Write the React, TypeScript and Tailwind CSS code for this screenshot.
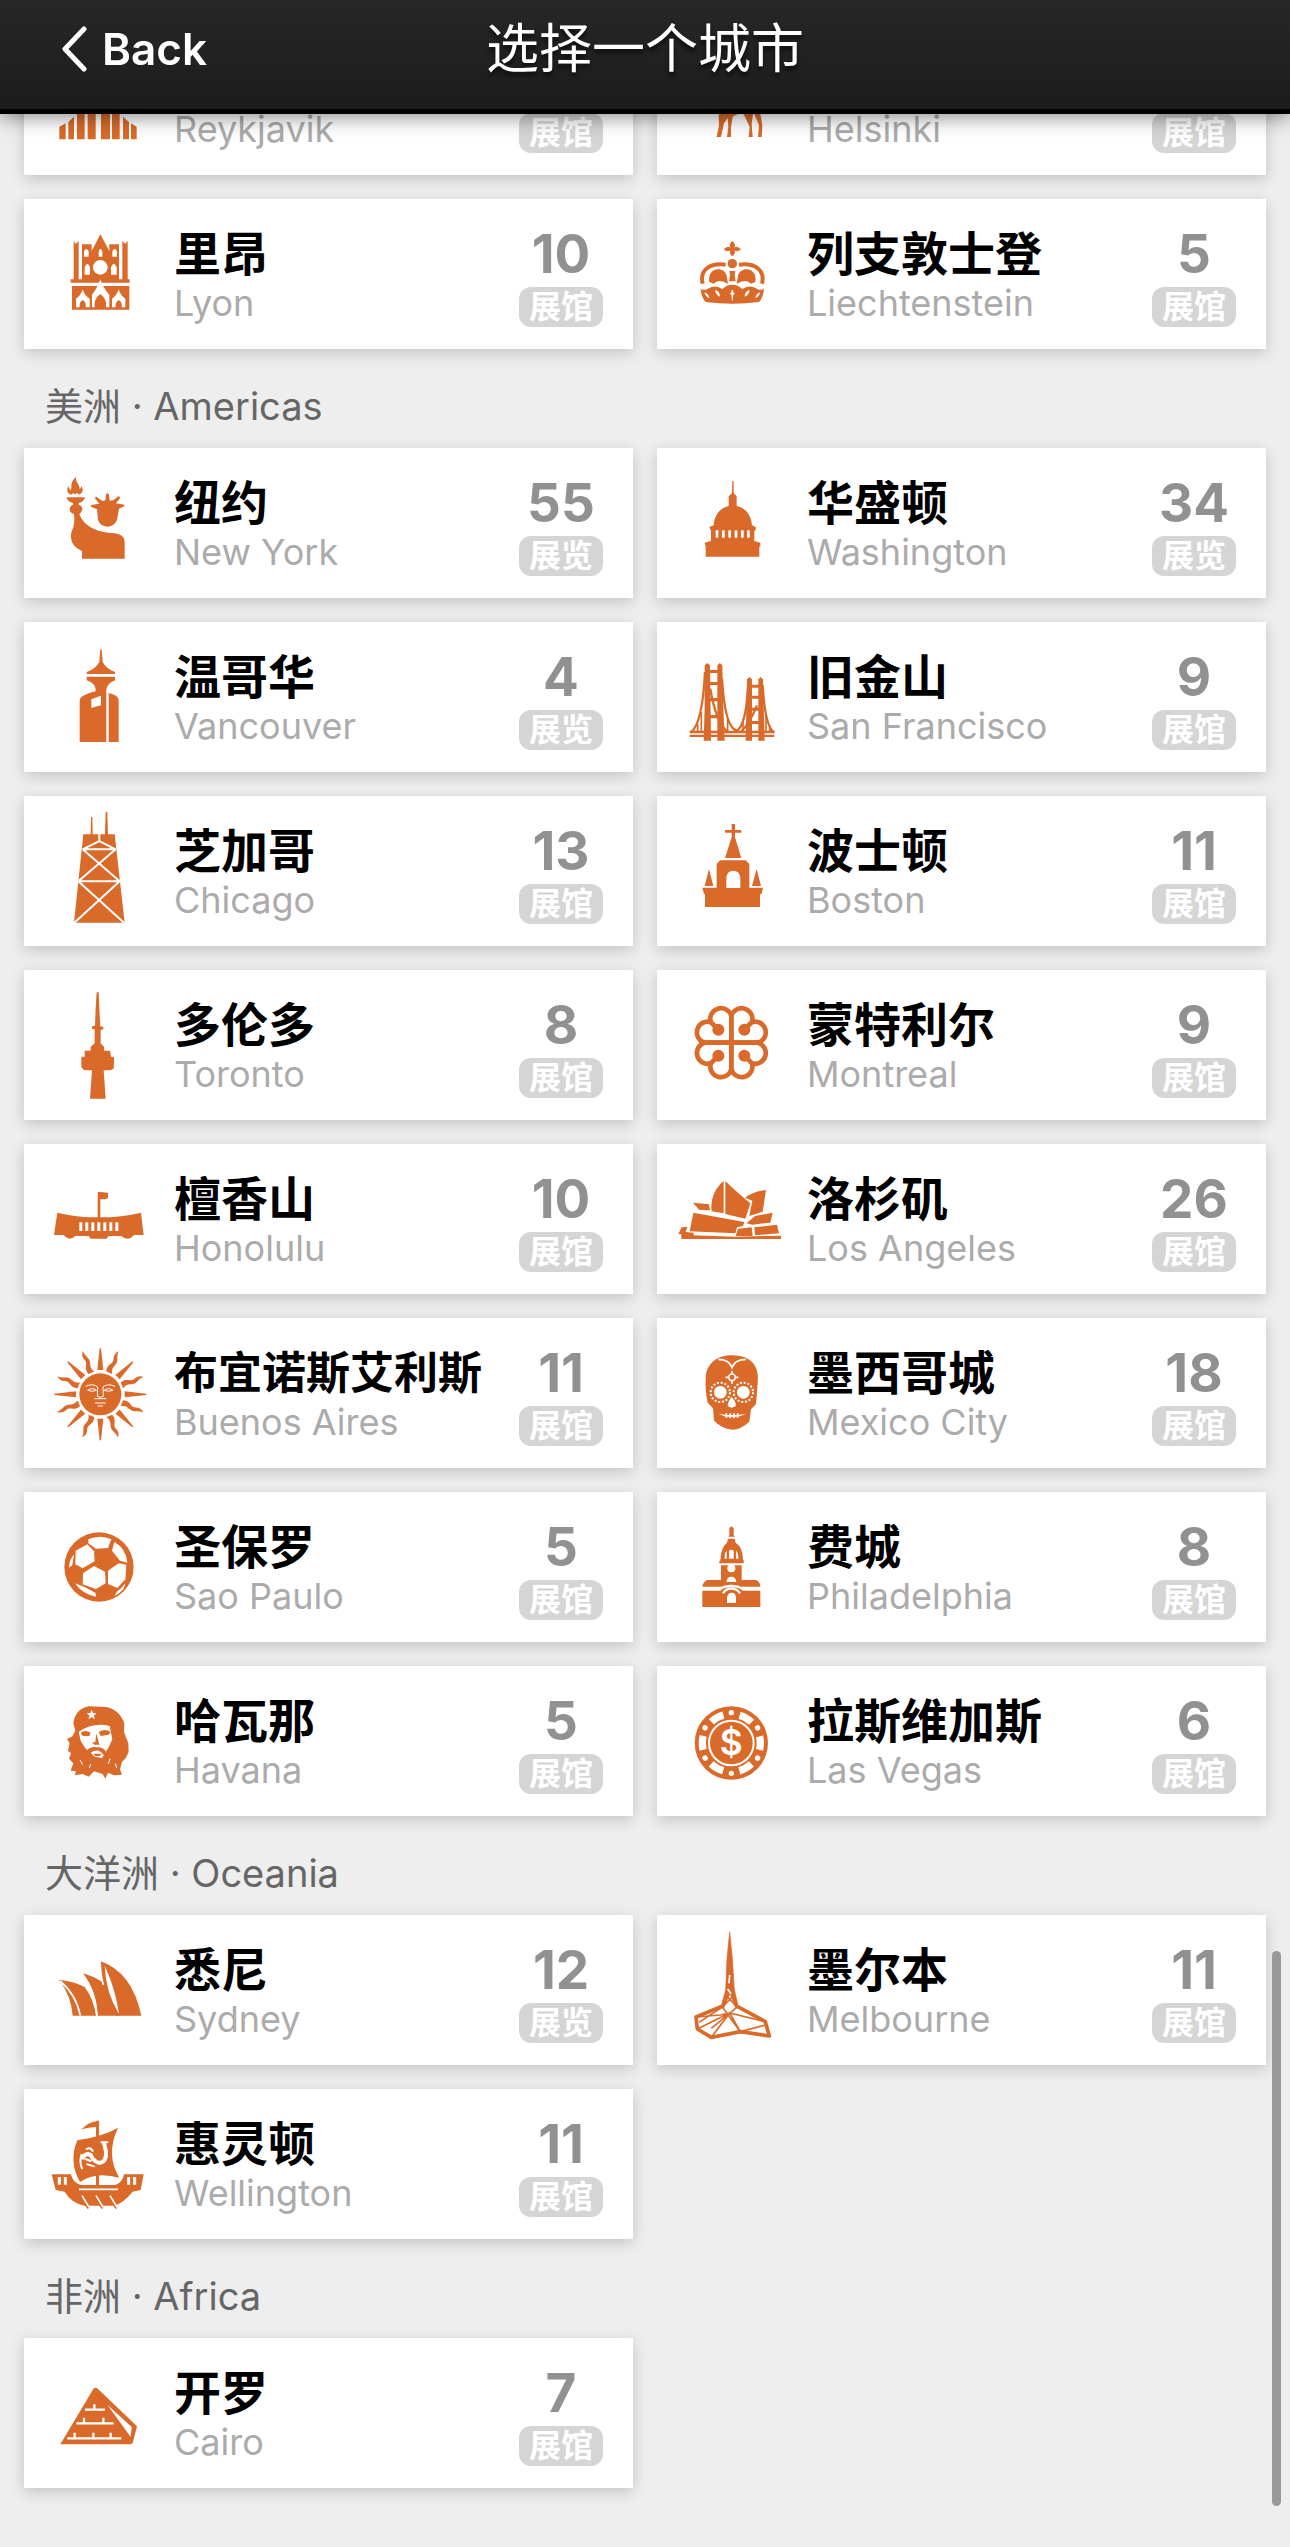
import clsx from "clsx";
import React from "react";

type City = {
  name?: string;
  english: string;
  count?: number;
  unit: "展馆" | "展览";
  viewBox: string;
  icon: React.ReactNode;
};

type Region = {
  title?: string;
  cities: City[];
};

const SPOKES = [0, 45, 90, 135, 180, 225, 270, 315];

const ReykjavikIcon = (
  <path d="M118 80l19-10v48h-19zM145 66l17-16v68h-17zM171 42l23-40v116h-23zM203 -20l24-60v198h-24zM243 -80l27 60v138h-27zM276 2l23 40v76h-23zM309 50l18 16v52h-18zM333 70l17 10v38h-17z" />
);

const HelsinkiIcon = (
  <path d="M190 0Q250-20 316 0V42L322 76L320 111H309L312 76L298 42H294L290 72L293 111H281L284 80L264 38L244 44L233 50L228 82V111H216L220 82L218 54L207 70L198 111H185L192 76Z" />
);

const LyonIcon = (
  <>
    <path d="M161 422l6 10 9-10v116h10V433h29v20l26-50 27 50v-20h29v105h10V422l9 10 7-10v116h6v10H152v-10h9z" />
    <path d="M156 558h172v71H156z" />
    <g className="fill-white">
      <path d="M192 470v-16q7-14 14 0v16zM277 470v-16q7-14 14 0v16zM236 470v-16q5-14 11 0v16zM194 524v-22q8-22 16 0v22zM273 524v-22q8-22 17 0v22z" />
      <circle cx="241" cy="502" r="22" />
      <path d="M162 551h60v5h-60zM261 551h64v5h-64zM241 538q8 26 27 46v38h-10q4-24-17-40q-21 16-17 40h-8v-38q17-20 25-46z" />
      <path d="M188 568q5 18 21 28v26h-12q2-16-9-22q-11 6-9 22h-11v-26q15-10 20-28zM296 568q5 18 20 28v26h-11q2-16-9-22q-11 6-9 22h-11v-26q15-10 20-28z" />
    </g>
  </>
);

const CrownIcon = (
  <>
    <path d="M232 423q13 11 5 20q9-8 21 5q-12 11-21 2q8 9-5 19q-12-10-5-19q-9 9-21-2q12-13 21-5q-8-9 5-20z" />
    <circle cx="232" cy="491" r="14" />
    <path d="M223 513h18l-2 12 3 19h-20l3-19z" />
    <g className="fill-none stroke-current" strokeWidth="12">
      <path d="M143 551C133 510 164 488 212 494M321 551C331 510 300 488 252 494" />
    </g>
    <path d="M163 546C155 502 207 496 215 527L219 551Q190 535 176 551zM301 546C309 502 257 496 249 527L245 551Q274 535 288 551z" />
    <path d="M137 566Q148 573 158 566Q183 552 202 567Q215 554 232 554Q249 554 262 567Q281 552 306 566Q316 573 327 566Q325 592 312 606Q232 616 152 606Q139 592 137 566z" />
    <g className="fill-white">
      <path d="M148 577q13 4 15 18q-11-5-15-18zM180 570q14 2 15 20q-13-4-15-20zM316 577q-13 4-15 18q11-5 15-18zM284 570q-14 2-15 20q13-4 15-20zM230 570h4l1 8 5 2-5 4-2 18h-2l-2-18-5-4 5-2z" />
    </g>
  </>
);

const LibertyIcon = (
  <>
    <path d="M169 1130C148 1148 158 1156 152 1172L145 1159C137 1174 146 1184 156 1184Q160 1176 165 1184Q171 1176 176 1184C190 1180 190 1168 185 1159L179 1168C180 1150 164 1148 169 1130z" />
    <path d="M139 1192H195Q192 1206 176 1209V1214Q188 1218 187 1228Q186 1236 178 1243C190 1275 225 1294 262 1298C298 1299 314 1304 314 1328V1376H186V1353C160 1342 152 1325 153 1305C155 1286 166 1284 162 1243Q149 1238 149 1228Q149 1218 159 1214V1209Q143 1206 139 1192z" />
    <path d="M231 1228L213 1220V1215L238 1211L224 1194L229 1190L247 1203L256 1201L258 1184Q262 1176 267 1184L269 1202L280 1201L296 1188L301 1193L288 1210L313 1214V1219L297 1226L291 1260Q282 1280 262 1280Q241 1279 234 1260z" />
  </>
);

const CapitolIcon = (
  <>
    <path d="M232 1143h4v36l9 10v29C275 1225 289 1248 291 1276L302 1281V1290L298 1293V1323L316 1328V1338L313 1341V1370H152V1341L149 1328L168 1323V1293L163 1281L176 1276C178 1248 192 1225 221 1218V1189L231 1179z" />
    <g className="fill-white">
      {[182, 201, 220, 239, 258, 276].map((x) => (
        <rect key={x} x={x} y="1291" width="8" height="22" />
      ))}
    </g>
  </>
);

const VancouverIcon = (
  <>
    <path d="M229 82h4l3 38Q248 142 273 150V156H188V150Q214 142 226 120z" />
    <path d="M188 164H273V175Q246 184 246 212Q284 216 284 236V360H167V236Q167 220 215 208Q216 184 188 175z" />
    <path className="fill-white" d="M247 214h7v146h-7zM202 232l29-11v29l-29 8z" />
  </>
);

const GoldenGateIcon = (
  <>
    <path d="M143 130l8-7 8 7 3 226h-22l3-100zM181 130l7-7 8 7 3 126 4 100h-22zM270 172l7-7 8 7v184h-19zM304 172l7-7 7 7 5 184h-19z" />
    <path d="M150 144h40v9h-40zM150 180h40v9h-40zM150 228h40v10h-40zM150 279h40v10h-40zM278 188h33v9h-33zM278 221h33v9h-33zM278 257h33v9h-33zM278 297h33v9h-33zM98 326h254v8H98zM98 338h254v7H98z" />
    <g className="fill-none stroke-current" strokeWidth="7">
      <path d="M144 150Q136 310 100 332M195 170Q204 320 240 326Q266 310 273 200M317 190Q324 315 352 332M160 200Q176 300 212 330M300 250Q280 300 252 330" />
      <path strokeWidth="5" d="M122 305v25M133 270v60M212 290v40M258 290v40M327 280v50M338 310v20" />
    </g>
  </>
);

const ChicagoIcon = (
  <>
    <path d="M190 163h22l1-52h4l1 52h37l2-68h5l2 68h20l30 265H162z" />
    <g className="fill-none stroke-white" strokeWidth="6">
      <path d="M238 163V183M188 208L238 183L287 208zM188 208L299 304H175L287 208M175 304L312 428M299 304L163 428" />
    </g>
  </>
);

const TorontoIcon = (
  <path d="M230 637h6l2 48 3 54 9 2v7l-8 2v40l10 10v12h18l3 18 9 2v16l-1 18-10 5h-20l6 85h-47l6-85h-23l-9-9v-32h10v-18h18v-12l12-10v-42l-8-2v-7l9-2 2-54z" />
);

const HonoluluIcon = (
  <>
    <path d="M112 1298Q170 1312 233 1312V1236H241L264 1238V1254L256 1258H241V1312Q304 1312 363 1298L371 1365H342Q334 1376 322 1376Q311 1376 304 1368H266L260 1376H212L206 1368H166Q158 1376 148 1376Q137 1374 131 1365H102z" />
    <g className="fill-white">
      {[178, 196, 214, 232, 250, 268, 286].map((x) => (
        <rect key={x} x={x} y="1327" width="9" height="26" />
      ))}
    </g>
  </>
);

const BostonIcon = (
  <>
    <path d="M230 132h10v18h19v8h-19v14l19 62h-49l20-62v-14h-20v-8h20z" />
    <path d="M185 252l10-11h77l11 11v71h41l-4 19-5 1v38H150v-38l-3-1-5-19h43z" />
    <path d="M162 267l13 51h-26zM305 267l13 51h-27z" />
    <path className="fill-white" d="M214 324v-30q2-22 21-22t21 22v30z" />
  </>
);

const MontrealIcon = (
  <g transform="translate(229 788)" className="fill-none stroke-current" strokeWidth="14">
    {[0, 90, 180, 270].map((angle) => (
      <g key={angle} transform={`rotate(${angle})`}>
        <path d="M0 0V-80A32 32 0 1 0 -62 -62A32 32 0 1 0 -80 0H0" />
        <path d="M-62-62L-40-40" />
        <circle cx="-39" cy="-39" r="11" className="fill-current" />
      </g>
    ))}
  </g>
);

const LosAngelesIcon = (
  <>
    <path d="M206 1203V1300L170 1294C165 1256 182 1222 206 1203zM211 1203Q238 1230 286 1270L271 1316L211 1302z" />
    <path d="M333 1230L323 1295L283 1308L292 1262L270 1253Q294 1234 333 1230zM114 1268L162 1273L165 1291L132 1289z" />
    <path d="M115 1298L268 1326L264 1338L246 1342L241 1360L104 1354zM275 1330L300 1308L353 1298L346 1328L292 1334z" />
    <path d="M249 1346L290 1342L293 1368H242zM298 1342L366 1334L372 1360L300 1366zM70 1362L80 1342L97 1340L92 1356L116 1358V1366L240 1370L378 1367V1377H79V1363z" />
  </>
);

const SunIcon = (
  <g transform="translate(241 283)">
    {SPOKES.map((angle) => (
      <g key={angle} transform={`rotate(${angle})`}>
        <path d="M-9-73L-2-138H2L9-73z" />
        <path
          transform="rotate(22)"
          d="M-9-70C-17-94 5-98-4-116Q-8-128 2-140Q2-128 8-116C16-98-3-92 10-70z"
        />
      </g>
    ))}
    <circle r="63" />
    <g className="fill-none stroke-white" strokeWidth="3">
      <path d="M-44-24Q-22-34-8-22L-9 6Q0 12 9 6L8-22Q22-34 44-24M-38-12Q-24-22-12-12Q-24-6-38-12M38-12Q24-22 12-12Q24-6 38-12M-16 26H16M-8 35H8M-18 13H18" />
    </g>
  </g>
);

const SkullIcon = (
  <>
    <path d="M232 166C290 166 314 200 308 250L303 312L288 328L283 365Q258 388 232 389Q200 386 177 362L174 325L158 308Q150 270 152 236C153 190 186 166 232 166z" />
    <g className="fill-white">
      <circle cx="196" cy="277" r="19" />
      <circle cx="265" cy="277" r="19" />
      <path d="M230 291q14 14 12 28l-12 4-12-4q0-14 12-28zM190 341l20 3q22 2 42 0l22-3-20 8q-22 3-46 0z" />
    </g>
    <g className="fill-none stroke-white" strokeWidth="5">
      <path d="M190 178Q222 178 231 202Q240 178 273 178M214 340v13M226 340v15M237 340v15M248 340v13" />
      <circle cx="231" cy="232" r="10" />
      <path d="M231 213v8M231 243v8M212 232h8M242 232h8" />
      <g strokeWidth="6" strokeDasharray="6 5.4">
        <circle cx="196" cy="277" r="29" />
        <circle cx="265" cy="277" r="29" />
      </g>
    </g>
  </>
);

const FootballIcon = (
  <>
    <circle cx="237" cy="801" r="104" />
    <g className="fill-white">
      <path d="M205 718Q240 702 274 718L264 744L228 746L205 730z" />
      <path d="M167 752L202 733L222 754L224 784L188 805L166 793z" />
      <path d="M189 820L222 798L255 815L257 850L228 867L188 853z" />
      <path d="M264 812L296 790L319 794L316 838L292 864L264 852z" />
      <path d="M283 726Q318 745 322 788L300 782L276 752z" />
      <path d="M162 764L157 795L147 803Q147 778 162 764zM165 850L192 860L226 878L228 890Q186 882 165 850zM290 876Q306 864 316 850L310 868Q300 880 284 888z" />
    </g>
  </>
);

const PhiladelphiaIcon = (
  <>
    <path d="M223 684l6-5 7 5v22l4 4h-20l3-5zM219 716h20l3 12Q264 742 264 780H266V790H193V782H196Q198 742 216 728z" />
    <path d="M198 796H260V840H304Q316 846 316 860H142Q144 846 156 840H198z" />
    <path d="M142 872H316V921H142z" />
    <path d="M196 868Q206 846 229 846T264 868L256 880H202z" />
    <g className="fill-white">
      <path d="M209 776Q208 758 215 752V776zM222 776V752Q229 746 236 752V776zM243 776V752Q251 760 250 776z" />
      <circle cx="229" cy="805" r="12" />
      <path d="M214 846q2-16 15-16t15 16zM216 909v-16q2-15 14-15t13 15v16z" />
    </g>
    <path className="fill-none stroke-white" strokeWidth="7" d="M142 866H198Q208 858 229 858T260 866H316M204 880Q212 866 229 866T255 880" />
  </>
);

const CheIcon = (
  <>
    <path d="M166 1292L160 1270Q165 1228 205 1219L258 1221Q298 1228 313 1270L312 1296L325 1330L326 1356L316 1376L306 1385L300 1408L306 1424L282 1426L264 1418L256 1436L248 1422L222 1414L206 1430L188 1422L164 1426L168 1414L152 1412L160 1390L147 1376L153 1360L144 1352L149 1330L141 1316L156 1310z" />
    <g className="fill-white">
      <path d="M215 1229l4 10 11 1-9 7 4 11-10-7-10 7 4-11-9-7 11-1z" />
      <path d="M176 1296Q218 1266 269 1278L277 1318L266 1342L256 1358L246 1374L224 1370L206 1352L196 1346L182 1322z" />
    </g>
    <path d="M182 1298Q196 1288 212 1298L208 1308L188 1308zM236 1296Q256 1284 272 1296L266 1304L242 1308zM229 1300L238 1334L224 1334L216 1328L226 1326zM200 1352Q212 1338 230 1342Q250 1340 260 1358L252 1366Q240 1350 228 1352Q214 1352 206 1368zM220 1361H246L238 1368H226zM176 1322L198 1346L190 1366L174 1350z" />
    <path className="fill-none stroke-white" strokeWidth="3" d="M180 1380l8 14M270 1376l-5 16M286 1390l4 14M212 1392l-4 12" />
  </>
);

const ChipIcon = (
  <>
    <circle cx="229" cy="1329" r="110" />
    <g className="fill-none stroke-white">
      <circle cx="229" cy="1329" r="87" strokeWidth="22" strokeDasharray="42 49.1" strokeDashoffset="21" />
      <circle cx="229" cy="1329" r="67" strokeWidth="6" />
    </g>
    <g className="fill-white">
      {[0, 60, 120, 180, 240, 300].map((angle) => (
        <circle key={angle} cx="229" cy="1238" r="8" transform={`rotate(${angle} 229 1329)`} />
      ))}
      <text x="229" y="1366" textAnchor="middle" fontSize="106" fontWeight="600">
        $
      </text>
    </g>
  </>
);

const SydneyIcon = (
  <>
    <path d="M117 15Q160 18 194 36Q222 74 228 122H158Q154 62 117 15z" />
    <path d="M188-5Q222 4 248 22L300 122H233Q230 46 188-5z" />
    <path d="M240-42Q336-10 364 122H288Q244 50 240-42z" />
    <path className="fill-white" d="M254-28Q286 40 297 116Q258 56 254-28z" />
    <path className="fill-none stroke-white" strokeWidth="5" d="M120 18Q168 58 181 122M188-2Q226 50 231 122M240-42Q242 0 250 30" />
  </>
);

const MelbourneIcon = (
  <g className="fill-none stroke-current" strokeLinejoin="round">
    <path d="M218 50L210 130L206 225L192 275L200 280L219 235L236 280L244 274L232 225L226 130z" className="fill-current" strokeWidth="2" />
    <path strokeWidth="11" d="M194 274L117 306L121 342L163 367L250 350L337 363L325 320L242 275" />
    <path strokeWidth="5" d="M117 306L190 300L218 294L325 320M218 294L163 367M218 294L250 350M218 294L121 342M206 240L240 276M232 240L196 276L250 350L325 330M242 275L163 340M126 322L196 276" />
    <path className="stroke-white" strokeWidth="5" d="M218 180L216 205M212 222L222 236" />
  </g>
);

const ShipIcon = (
  <>
    <path d="M228 437H237V632H228zM236 437L232 456Q204 456 184 464Q204 440 236 437z" />
    <path d="M172 496Q250 484 294 458Q256 540 298 608Q226 588 180 621Q145 560 172 496z" />
    <path d="M95 598H153Q158 624 184 630H286Q308 622 312 598H371L362 645L338 650Q312 682 284 692H192Q152 682 134 650L107 645z" />
    <path className="fill-none stroke-current" strokeWidth="8" d="M190 676L206 700M232 676L248 700M274 676L290 700" />
    <g className="fill-none stroke-white">
      <path strokeWidth="5" d="M177 643H294M186 662L208 698M228 662L250 698M270 662L292 698" />
      <path strokeWidth="9" d="M118 606v23M136 606v23M326 606v23M344 606v23" />
      <path strokeWidth="12" strokeLinecap="round" d="M188 548Q196 532 212 540Q222 562 240 564Q260 560 258 530L252 504" />
      <path strokeWidth="6" strokeLinecap="round" d="M184 540Q178 562 186 580M196 552L212 558M202 568L222 574M244 502H262M200 522Q212 516 218 528" />
    </g>
  </>
);

const PyramidIcon = (
  <>
    <path d="M220 1242Q227 1234 234 1242L351 1354L338 1404L332 1408H121z" />
    <path className="fill-white" d="M262 1289L335 1356L332 1386z" />
    <path className="fill-none stroke-white" strokeWidth="7" d="M195 1304H255M223 1304V1288M169 1345H281M192 1345V1328M250 1345V1328M142 1390H304M164 1390V1373M220 1390V1373M272 1390V1373" />
  </>
);

const regions: Region[] = [
  {
    cities: [
      { english: "Reykjavik", unit: "展馆", viewBox: "12 -225 450 450", icon: ReykjavikIcon },
      { english: "Helsinki", unit: "展馆", viewBox: "6 -225 450 450", icon: HelsinkiIcon },
      { name: "里昂", english: "Lyon", count: 10, unit: "展馆", viewBox: "12 297 450 450", icon: LyonIcon },
      { name: "列支敦士登", english: "Liechtenstein", count: 5, unit: "展馆", viewBox: "6 297 450 450", icon: CrownIcon }
    ]
  },
  {
    title: "美洲 · Americas",
    cities: [
      { name: "纽约", english: "New York", count: 55, unit: "展览", viewBox: "12 1044 450 450", icon: LibertyIcon },
      { name: "华盛顿", english: "Washington", count: 34, unit: "展览", viewBox: "6 1044 450 450", icon: CapitolIcon },
      { name: "温哥华", english: "Vancouver", count: 4, unit: "展览", viewBox: "0 0 450 450", icon: VancouverIcon },
      { name: "旧金山", english: "San Francisco", count: 9, unit: "展馆", viewBox: "0 0 450 450", icon: GoldenGateIcon },
      { name: "芝加哥", english: "Chicago", count: 13, unit: "展馆", viewBox: "12 48 450 450", icon: ChicagoIcon },
      { name: "波士顿", english: "Boston", count: 11, unit: "展馆", viewBox: "6 48 450 450", icon: BostonIcon },
      { name: "多伦多", english: "Toronto", count: 8, unit: "展馆", viewBox: "12 570 450 450", icon: TorontoIcon },
      { name: "蒙特利尔", english: "Montreal", count: 9, unit: "展馆", viewBox: "6 570 450 450", icon: MontrealIcon },
      { name: "檀香山", english: "Honolulu", count: 10, unit: "展馆", viewBox: "12 1092 450 450", icon: HonoluluIcon },
      { name: "洛杉矶", english: "Los Angeles", count: 26, unit: "展馆", viewBox: "6 1092 450 450", icon: LosAngelesIcon },
      { name: "布宜诺斯艾利斯", english: "Buenos Aires", count: 11, unit: "展馆", viewBox: "12 54 450 450", icon: SunIcon },
      { name: "墨西哥城", english: "Mexico City", count: 18, unit: "展馆", viewBox: "6 54 450 450", icon: SkullIcon },
      { name: "圣保罗", english: "Sao Paulo", count: 5, unit: "展馆", viewBox: "12 576 450 450", icon: FootballIcon },
      { name: "费城", english: "Philadelphia", count: 8, unit: "展馆", viewBox: "6 576 450 450", icon: PhiladelphiaIcon },
      { name: "哈瓦那", english: "Havana", count: 5, unit: "展馆", viewBox: "12 1098 450 450", icon: CheIcon },
      { name: "拉斯维加斯", english: "Las Vegas", count: 6, unit: "展馆", viewBox: "6 1098 450 450", icon: ChipIcon }
    ]
  },
  {
    title: "大洋洲 · Oceania",
    cities: [
      { name: "悉尼", english: "Sydney", count: 12, unit: "展览", viewBox: "12 -180 450 450", icon: SydneyIcon },
      { name: "墨尔本", english: "Melbourne", count: 11, unit: "展馆", viewBox: "0 0 450 450", icon: MelbourneIcon },
      { name: "惠灵顿", english: "Wellington", count: 11, unit: "展馆", viewBox: "12 342 450 450", icon: ShipIcon }
    ]
  },
  {
    title: "非洲 · Africa",
    cities: [
      { name: "开罗", english: "Cairo", count: 7, unit: "展馆", viewBox: "12 1089 450 450", icon: PyramidIcon }
    ]
  }
];

function CityCard({ city }: { city: City }) {
  return (
    <a
      href={`#${city.english}`}
      className="flex h-[150px] bg-white pr-[30px] shadow-[0_4px_14px_rgba(0,0,0,0.18)]">
      <svg
        viewBox={city.viewBox}
        aria-hidden="true"
        className="size-[150px] shrink-0 fill-current text-[#d96a2a]">
        {city.icon}
      </svg>
      <div className="min-w-0 flex-1 whitespace-nowrap pt-7">
        <p
          className={clsx(
            "h-[54px] font-semibold leading-[54px] text-black",
            city.name && city.name.length > 6 ? "text-[44px]" : "text-[47px]"
          )}>
          {city.name}
        </p>
        <p className="text-[36px] leading-[44px] text-[#ababab]">{city.english}</p>
      </div>
      <div className="flex w-[84px] shrink-0 flex-col items-center gap-[6px] pt-7">
        <span className="h-[54px] text-[53px] font-bold leading-[54px] text-[#919191]">
          {city.count}
        </span>
        <span className="flex h-10 w-full items-center justify-center rounded-xl bg-[#d5d5d5] text-[32px] font-semibold leading-10 text-white">
          {city.unit}
        </span>
      </div>
    </a>
  );
}

function Header() {
  return (
    <header className="fixed inset-x-0 top-0 z-10 grid h-[114px] grid-cols-[1fr_auto_1fr] border-b-[5px] border-black bg-linear-to-b from-[#272727] to-[#1d1c1c] px-[60px] pb-[11px] text-white shadow-[0_2px_20px_rgba(0,0,0,0.5)]">
      <button type="button" className="flex items-center gap-[14px] justify-self-start text-[44px] font-semibold">
        <svg viewBox="0 0 28 46" aria-hidden="true" className="h-[46px] w-7 fill-none stroke-current">
          <path d="M24 3L5 23L24 43" strokeWidth="5" strokeLinecap="round" strokeLinejoin="round" />
        </svg>
        Back
      </button>
      <h1 className="self-center text-[53px] leading-[60px] [text-shadow:0_4px_4px_rgba(0,0,0,0.6)]">
        选择一个城市
      </h1>
    </header>
  );
}

export default function App() {
  return (
    <div className="relative min-h-screen bg-[#eeeeee] font-[Inter,'Noto_Sans_CJK_SC',sans-serif]">
      <Header />
      <main className="px-6 pb-[59px] pt-[25px]">
        {regions.map((region) => (
          <section key={region.cities[0].english}>
            {region.title && (
              <h2 className="px-[21px] pb-[18px] pt-[33px] text-[38px] leading-[48px] text-[#666666]">
                {region.title}
              </h2>
            )}
            <div className="grid grid-cols-2 gap-6">
              {region.cities.map((city) => (
                <CityCard key={city.english} city={city} />
              ))}
            </div>
          </section>
        ))}
      </main>
      {/* scroll indicator */}
      <div className="absolute bottom-[41px] right-[9px] h-[555px] w-[9px] rounded-full bg-[#999999]" />
    </div>
  );
}
